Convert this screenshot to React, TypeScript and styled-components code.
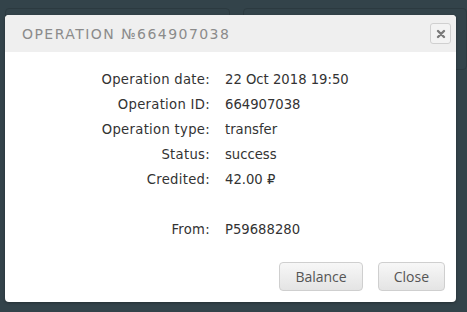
import * as React from 'react';
import styled, { createGlobalStyle } from 'styled-components';

const GlobalStyle = createGlobalStyle`
  html, body {
    margin: 0;
    padding: 0;
    background: #33434a;
    font-family: 'DejaVu Sans', 'Liberation Sans', sans-serif;
  }
  #root {
    width: 467px;
    height: 312px;
    overflow: hidden;
  }
`;

interface IRow {
  label: string;
  value: string;
}

const rows: (IRow | null)[] = [
  { label: 'Operation date:', value: '22 Oct 2018 19:50' },
  { label: 'Operation ID:', value: '664907038' },
  { label: 'Operation type:', value: 'transfer' },
  { label: 'Status:', value: 'success' },
  { label: 'Credited:', value: '42.00 ₽' },
  null,
  { label: 'From:', value: 'P59688280' },
];

const App: React.FunctionComponent = () => {
  return (
    <StyledPage>
      <GlobalStyle />
      <StyledBackdrop>
        <StyledPanel />
        <StyledPanel />
      </StyledBackdrop>
      <StyledDialog>
        <StyledHeader>
          <StyledTitle>Operation №664907038</StyledTitle>
          <StyledCloseIcon aria-label="close">
            <svg width="10" height="10" viewBox="0 0 10 10">
              <path d="M2 2 L8 8 M8 2 L2 8" stroke="#7a7a7a" strokeWidth="2.4" strokeLinecap="round" />
            </svg>
          </StyledCloseIcon>
        </StyledHeader>
        <StyledBody>
          {rows.map((row, i) =>
            row ? (
              <React.Fragment key={i}>
                <StyledLabel>{row.label}</StyledLabel>
                <StyledValue>{row.value}</StyledValue>
              </React.Fragment>
            ) : (
              <StyledSpacer key={i} />
            ),
          )}
        </StyledBody>
        <StyledFooter>
          <StyledButton>Balance</StyledButton>
          <StyledButton>Close</StyledButton>
        </StyledFooter>
      </StyledDialog>
    </StyledPage>
  );
};

const StyledPage = styled.div`
  position: relative;
  width: 467px;
  height: 312px;
`;

const StyledBackdrop = styled.div`
  display: flex;
  gap: 13px;
  padding: 8px 0 0 5px;
`;

const StyledPanel = styled.div`
  flex: 1;
  height: 60px;
  border: 1px solid #2c3a40;
  border-radius: 4px;
`;

const StyledDialog = styled.div`
  position: absolute;
  left: 5px;
  top: 15px;
  width: 451px;
  height: 287px;
  background: #fff;
  border-radius: 4px;
  box-shadow: 0 1px 3px rgba(0, 0, 0, 0.3);
  display: flex;
  flex-direction: column;
  overflow: hidden;
`;

const StyledHeader = styled.div`
  height: 37px;
  background: #efefef;
  display: flex;
  align-items: center;
  justify-content: space-between;
  padding: 0 5px 0 17px;
`;

const StyledTitle = styled.div`
  font-size: 14px;
  letter-spacing: 1.45px;
  text-transform: uppercase;
  color: #8b8b8b;
`;

const StyledCloseIcon = styled.div`
  width: 19px;
  height: 19px;
  border: 1px solid #d0d0d0;
  border-radius: 3px;
  background: #f3f3f3;
  display: flex;
  align-items: center;
  justify-content: center;
`;

const StyledBody = styled.div`
  display: grid;
  grid-template-columns: 205px 1fr;
  grid-auto-rows: 25px;
  column-gap: 15px;
  align-items: center;
  padding-top: 15px;
  font-size: 13.2px;
  color: #333;
`;

const StyledLabel = styled.div`
  text-align: right;
  letter-spacing: 0.3px;
`;

const StyledValue = styled.div``;

const StyledSpacer = styled.div`
  grid-column: 1 / 3;
`;

const StyledFooter = styled.div`
  margin-top: auto;
  display: flex;
  justify-content: flex-end;
  gap: 15px;
  padding: 0 11px 11px 0;
`;

const StyledButton = styled.button`
  height: 29px;
  padding: 0 15px;
  font-family: 'Open Sans', sans-serif;
  font-size: 14px;
  color: #555;
  background: linear-gradient(#f7f7f7, #e4e4e4);
  border: 1px solid #cfcfcf;
  border-radius: 4px;
`;

export default App;
